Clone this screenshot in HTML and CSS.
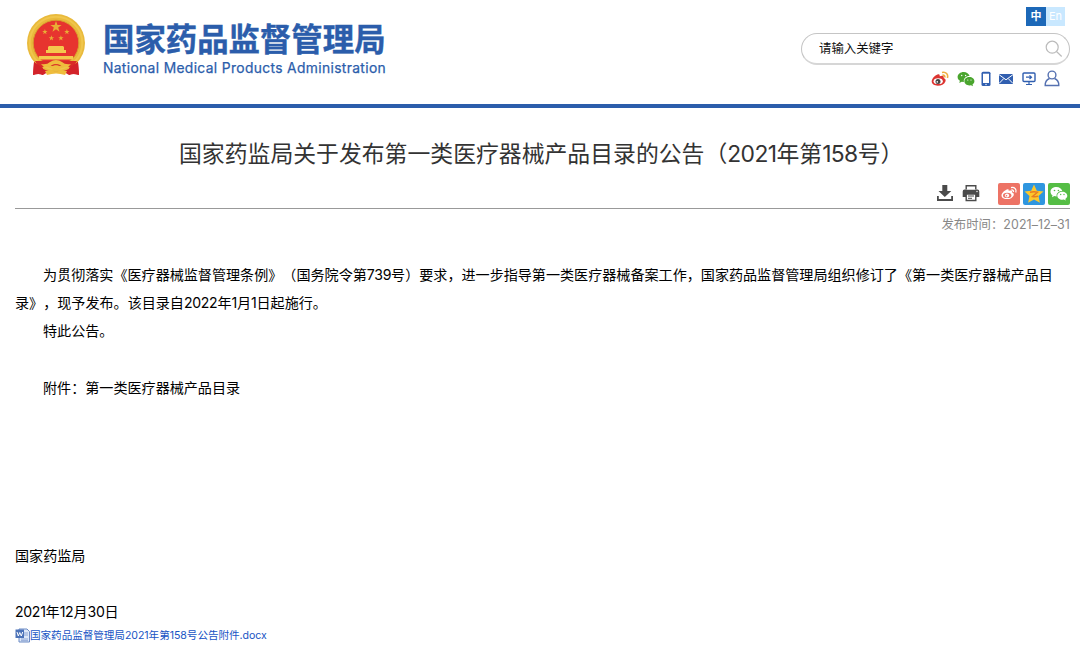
FILE: index.html
```html
<!DOCTYPE html>
<html lang="zh-CN">
<head>
<meta charset="utf-8">
<title>国家药品监督管理局</title>
<link rel="stylesheet" href="styles.css">
</head>
<body>
<header class="header">
  <div class="brand">
    <svg class="emblem" viewBox="0 0 60 64">
      <path d="M8 49h44l1 13q-7-2-10 0l-5-3H22l-5 3q-4-2-10 0z" fill="#d3232a"/>
      <circle cx="30" cy="30" r="29" fill="#e9ba3c"/>
      <circle cx="30" cy="30" r="26.3" fill="none" stroke="#f0c64c" stroke-width="2"/>
      <circle cx="30" cy="30" r="22.8" fill="#e7342f" stroke="#d99b2d"/>
      <g fill="#e9ad35">
        <path id="star" d="M30 8l1.400 4h4.200l-3.400 2.600 1.300 4.100-3.500-2.500-3.500 2.500 1.300-4.100-3.400-2.600h4.200z"/>
        <use href="#star" transform="translate(4.500 12.200) scale(.48)"/>
        <use href="#star" transform="translate(26.500 12.200) scale(.48)"/>
        <use href="#star" transform="translate(11 18.500) scale(.48)"/>
        <use href="#star" transform="translate(20.500 18.500) scale(.48)"/>
      </g>
      <path d="M23 33h14l1 1v3h2v3H20v-3h2v-3zM13 43h34v3.500H13z" fill="#f4c84d"/>
      <path d="M9 48h42l-4 7q-6-1-9-4-4 4-8 0-4 4-8 0-3 3-9 4z" fill="#d92c28"/>
      <path d="M15 51q6 1 9-2 3-2 6-2t6 2q3 3 9 2l-3 3q-5 1-8-2-2-1-4-1t-4 1q-3 3-8 2z" fill="#efbd3d"/>
      <path d="M24 54q6-3 12 0l-3 3h-6zM19 58l6-1 5 2 5-2 6 1-2 4q-9-3-18 0z" fill="#efbd3d"/>
      <path d="M8 49l9 6v7q-5-2-10 0zM52 49l-9 6v7q5-2 10 0z" fill="#d3232a"/>
    </svg>
    <div class="brand-text">
      <div class="brand-cn">国家药品监督管理局</div>
      <div class="brand-en">National Medical Products Administration</div>
    </div>
  </div>
  <div class="tools">
    <div class="langs"><span class="lang active">中</span><span class="lang">En</span></div>
    <div class="search">
      <span class="search-text">请输入关键字</span>
      <svg class="search-icon" viewBox="0 0 18 18"><circle cx="7.200" cy="7.200" r="6" /><path d="M11.500 11.500l5.200 5"/></svg>
    </div>
    <div class="links">
      <svg class="i-weibo" viewBox="0 0 18 16">
        <path d="M7 3.300c1.300-.5 2 .5 1.700 2 2.400-1 4.700-.6 4 1.600 2 .7 2.300 2.200 1.600 3.800-1 2.400-4 4-7.500 4C3.300 14.700.7 13 .7 10.600.7 7.600 4.500 4 7 3.300z" fill="#dc3431"/>
        <ellipse cx="7.200" cy="10.200" rx="4.600" ry="2.900" fill="#fff"/>
        <circle cx="7" cy="10.400" r="2.500" fill="#444"/><circle cx="6.300" cy="10.900" r=".8" fill="#fff"/>
        <path d="M11 1.500c4-1 6.500 2 5.400 5.500M11.400 4.200c1.700-.3 2.700.8 2.300 2.300" fill="none" stroke="#efae3e" stroke-width="1.600"/>
      </svg>
      <svg class="i-wechat" viewBox="0 0 18 16">
        <path d="M6.700 1C3.300 1 .6 3.200.6 6c0 1.600.9 3 2.300 3.800L2.300 12l2.400-1.300 2.200.2C6.300 7.500 9 5 12.600 5.100 12 2.700 9.600 1 6.700 1z" fill="#4aa52e"/>
        <path d="M12.400 6C9.600 6 7.400 7.900 7.400 10.200s2.200 4.200 5 4.200l1.600-.2 2 1-.5-1.800c1.200-.8 1.900-1.900 1.900-3.200C17.400 7.900 15.200 6 12.400 6z" fill="#4aa52e"/>
        <g fill="#fff"><circle cx="4.700" cy="4.500" r=".7"/><circle cx="8.600" cy="4.500" r=".7"/><circle cx="10.800" cy="9" r=".6"/><circle cx="14" cy="9" r=".6"/></g>
      </svg>
      <svg class="i-phone" viewBox="0 0 10 16"><rect x=".5" y=".8" width="9" height="14.200" rx="1.500" fill="#315fb0"/><path d="M2 2.700h6v9.300H2z" fill="#fff"/><circle cx="5" cy="13.500" r=".7" fill="#fff"/></svg>
      <svg class="i-mail" viewBox="0 0 16 16"><path d="M1 3h14v10H1z" fill="#315fb0"/><path d="M1 3.600l7 5.200 7-5.200M1 12.500l4.800-5M15 12.500l-4.800-5" fill="none" stroke="#fff" stroke-width="1"/></svg>
      <svg class="i-screen" viewBox="0 0 14 16"><rect x="1" y="2" width="12" height="8.500" rx="1" fill="none" stroke="#315fb0" stroke-width="1.400"/><path d="M7 10.500v3M4 13.500h6M4 6.200h5.500M7.500 4.400l2 1.800-2 1.800" fill="none" stroke="#315fb0" stroke-width="1.200"/></svg>
      <svg class="i-user" viewBox="0 0 16 17"><circle cx="8" cy="5" r="3.900"/><path d="M5.500 8.500C2.500 9.800 1 12 1.200 15.500h13.600C15 12 13.500 9.800 10.500 8.500"/></svg>
    </div>
  </div>
</header>
<main class="page">
  <h1 class="title">国家药监局关于发布第一类医疗器械产品目录的公告（<span class="title-num">2021</span>年第<span class="title-num">158</span>号）</h1>
  <div class="actions">
    <svg class="i-download" viewBox="0 0 18 18"><path d="M6.300 1h5v6h4L8.800 13 2.500 7h3.800zM1 12h1.800v3h12.400v-3H17v5H1z" fill="#4b4b4b"/></svg>
    <svg class="i-print" viewBox="0 0 18 18"><path d="M2.500 5.500h13q1.800 0 1.800 2V13H14v-3H4v3H.7V7.500q0-2 1.800-2z" fill="#4b4b4b"/><path d="M4.200 5.500V1.700h9.600v3.800" fill="#fff" stroke="#4b4b4b" stroke-width="1.400"/><path d="M4.200 10h9.600v6.500H4.200z" fill="#fff" stroke="#4b4b4b" stroke-width="1.400"/><path d="M6 12h6M6 14.300h4" stroke="#4b4b4b"/><circle cx="15" cy="7.500" r=".7" fill="#fff"/></svg>
    <svg class="share share-first" viewBox="0 0 22 22"><rect width="22" height="22" rx="2" fill="#ed7365"/><path d="M9 6.500c1.300-.5 2 .3 1.700 1.500 2-.8 4-.4 3.400 1.400 2 .6 2 2 1.400 3.300-1 2-3.300 3.400-6.300 3.400-3.200 0-5.700-1.500-5.700-3.700 0-2.400 3.300-5.200 5.500-5.900z" fill="#fff"/><ellipse cx="9.200" cy="12.400" rx="4.200" ry="2.700" fill="#ed7365"/><circle cx="9" cy="12.500" r="2.100" fill="#fff"/><circle cx="8.500" cy="12.800" r=".8" fill="#ed7365"/><path d="M13 4.600c3.600-.8 6 2 4.800 5M13.400 7c1.500-.3 2.400.8 2 2" fill="none" stroke="#fff" stroke-width="1.300"/></svg>
    <svg class="share" viewBox="0 0 22 22"><rect width="22" height="22" rx="2" fill="#2f96df"/><path d="M11 1.500l2.800 6.200 6.700.7-5 4.600 1.400 6.800-5.900-3.400-5.900 3.400L6.500 13l-5-4.600 6.700-.7z" fill="#fcc82b"/><path d="M7 9.200q4-.8 7.500 0l-5 4.300q3 .6 5.500-.2" fill="none" stroke="#e77c22" stroke-width="1.500"/></svg>
    <svg class="share" viewBox="0 0 22 22"><rect width="22" height="22" rx="2" fill="#55bd45"/><path d="M8.500 4C5 4 2.500 6 2.500 8.700c0 1.500.8 2.800 2 3.600L4 14.300l2.300-1.200 2.300.3C8.200 10 11 8 14.300 8 13.700 5.700 11.400 4 8.500 4z" fill="#fff"/><path d="M14.300 8.800c-2.800 0-5 1.700-5 4s2.200 4 5 4l1.500-.2 2 1-.5-1.700c1.200-.8 2-1.800 2-3.100 0-2.300-2.200-4-5-4z" fill="#fff"/><g fill="#55bd45"><circle cx="6.500" cy="7.500" r=".8"/><circle cx="10.400" cy="7.500" r=".8"/><circle cx="12.700" cy="11.500" r=".7"/><circle cx="16" cy="11.500" r=".7"/></g></svg>
  </div>
  <div class="date">发布时间：<span class="date-num">2021–12–31</span></div>
  <article class="article">
    <p class="indent">为贯彻落实《医疗器械监督管理条例》（国务院令第<span class="num">739</span>号）要求，进一步指导第一类医疗器械备案工作，国家药品监督管理局组织修订了《第一类医疗器械产品目<br>录》，现予发布。该目录自<span class="num">2022</span>年<span class="num">1</span>月<span class="num">1</span>日起施行。</p>
    <p class="indent">特此公告。</p>
    <p class="indent attach">附件：第一类医疗器械产品目录</p>
    <p class="signer">国家药监局</p>
    <p class="signed-date"><span class="num">2021</span>年<span class="num">12</span>月<span class="num">30</span>日</p>
  </article>
  <a class="file">
    <svg class="i-doc" viewBox="0 0 15 15"><path d="M4 1h8l2.500 2.500V14H4z" fill="#dfe9f8" stroke="#6d8cc5"/><path d="M9 5h4M9 7h4M6 11h7M6 12.700h7" stroke="#7895ca" stroke-width=".8"/><path d="M.5 1.500h8.500v8.500H.5z" fill="#4c73b8"/><path d="M2 4l1.300 4 1.500-3.500L6.300 8l1.400-4" fill="none" stroke="#fff"/></svg>
    <span>国家药品监督管理局2021年第158号公告附件.docx</span>
  </a>
</main>
</body>
</html>
```
FILE: styles.css
```css
* { box-sizing: border-box; }
body { margin: 0; background: #fff; color: #000; font-family: Inter, "Noto Sans CJK SC", sans-serif; font-synthesis: none; text-spacing-trim: space-all; }
svg { display: block; flex: none; }
p, h1 { margin: 0; }

.header { height: 108px; border-bottom: 4px solid #2b5dab; display: flex; justify-content: space-between; }
.brand { display: flex; padding: 13px 0 0 26px; }
.emblem { width: 60px; height: 64px; }
.brand-text { padding-left: 17px; color: #2b5dab; white-space: nowrap; }
.brand-cn { height: 44px; font: 700 31.4px/49px "Noto Sans CJK SC", sans-serif; -webkit-text-stroke: .4px #2b5dab; }
.brand-en { font: 400 13.8px/22px Inter, sans-serif; letter-spacing: .36px; -webkit-text-stroke: .25px #2b5dab; }

.tools { width: 269px; margin-right: 10px; padding-top: 7px; }
.langs { display: flex; justify-content: flex-end; padding-right: 5px; }
.lang { width: 19px; height: 19px; background: #c9e8ff; color: #fff; font-size: 11px; line-height: 18px; text-align: center; }
.lang.active { width: 20px; background: #1c68b8; font-weight: 700; }
.search { height: 32px; margin-top: 7px; padding: 0 6px 0 17px; border: 1px solid #c5c5c5; border-bottom-width: 2px; border-bottom-color: #d6d6d6; border-radius: 16px; display: flex; align-items: center; justify-content: space-between; font-size: 12.4px; line-height: 28px; color: #111; }
.search-text { padding-top: 1px; }
.search-icon { width: 18px; height: 18px; fill: none; stroke: #bbb; stroke-width: 1.2; }
.links { display: flex; align-items: center; padding: 5px 10px 0 130px; }
.links svg { height: 16px; }
.i-weibo { width: 18px; }
.i-wechat { width: 18px; margin-left: 8px; }
.i-phone { width: 10px; margin-left: 6px; }
.i-mail { width: 16px; margin-left: 7px; }
.i-screen { width: 14px; margin-left: 8px; }
.links .i-user { width: 16px; height: 17px; margin-left: 8px; fill: none; stroke: #5571b1; stroke-width: 1.4; }

.page { padding: 0 10px 0 15px; }
.title { padding-top: 27px; margin-left: 164px; height: 74px; font-size: 22.85px; line-height: 38px; font-weight: 400; color: #333; white-space: nowrap; }
.title-num { letter-spacing: -.6px; }
.actions { height: 27px; border-bottom: 1px solid #999; display: flex; justify-content: flex-end; align-items: flex-start; }
.i-download, .i-print { width: 18px; height: 18px; margin: 2px 8px 0 0; }
.share { width: 22px; height: 22px; margin: 1px 0 0 3px; }
.share-first { margin-left: 10px; }
.date { height: 52px; padding-top: 5px; text-align: right; font-size: 12.4px; line-height: 22px; color: #888; }
.date-num { letter-spacing: .1px; }
.article { font-size: 14.08px; line-height: 28.2px; white-space: nowrap; }
.indent { text-indent: 28px; }
.attach { margin-top: 28.2px; }
.signer { margin-top: 139.800px; }
.signed-date { margin-top: 28.1px; }
.num { letter-spacing: -.3px; }
.file { display: flex; align-items: center; height: 19px; color: #1854c4; font-size: 10.6px; letter-spacing: -.05px; line-height: 19px; white-space: nowrap; }
.i-doc { width: 15px; height: 15px; }
```
